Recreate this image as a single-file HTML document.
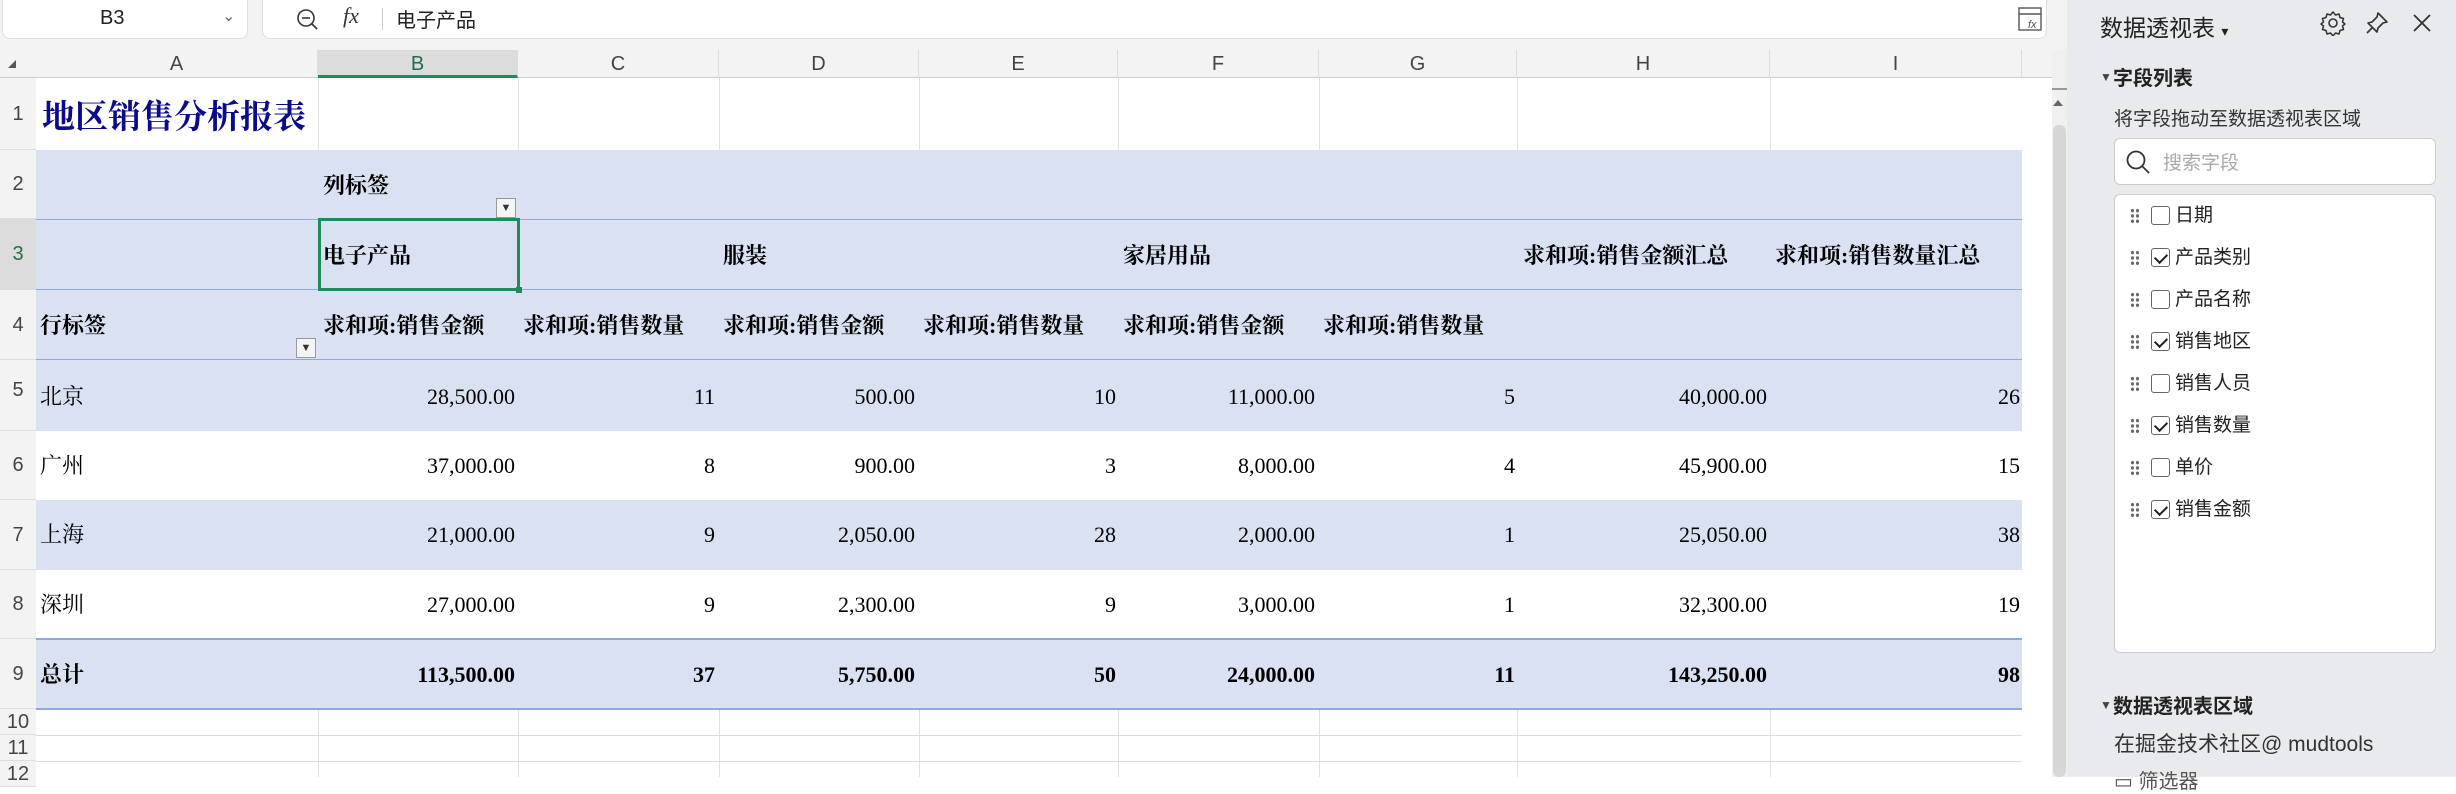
<!DOCTYPE html>
<html><head><meta charset="utf-8"><style>
*{margin:0;padding:0;box-sizing:border-box}
body{width:2456px;height:777px;overflow:hidden;background:#fff;font-family:"Liberation Sans","Noto Sans CJK SC",sans-serif;position:relative}
.a{position:absolute}
.c{position:absolute;font-family:"Liberation Serif","Noto Serif CJK SC",serif;font-size:22px;color:#000;white-space:nowrap;line-height:26px}
.b{font-weight:bold}
.r{text-align:right}
.hd{position:absolute;top:50px;height:28px;font-size:20px;color:#444;text-align:center;line-height:28px;border-right:1px solid #ddd}
.rn{position:absolute;left:0;width:36px;font-size:20px;color:#444;text-align:center;border-bottom:1px solid #ddd;background:#f3f3f3}
.vl{position:absolute;top:78px;width:1px;background:#e2e2e2}
.it{position:absolute;left:2130px;width:290px;font-size:19px;color:#222;height:24px;line-height:24px;white-space:nowrap}
.dots{position:absolute;left:0;top:4px;width:10px;height:16px;background-image:radial-gradient(circle,#666 1.5px,transparent 1.8px);background-size:5px 5.3px}
.cb{position:absolute;left:21px;top:2px;width:19px;height:19px;border:1px solid #666;border-radius:3px;background:#fff}
.cb.on::after{content:"";position:absolute;left:5px;top:2px;width:6px;height:10px;border:solid #222;border-width:0 2px 2px 0;transform:rotate(45deg)}
.lb{position:absolute;left:45px;top:0;white-space:nowrap}
</style></head><body>
<div class="a" style="left:0;top:0;width:2067px;height:50px;background:#f3f3f3"></div>
<div class="a" style="left:2px;top:0;width:246px;height:39px;background:#fff;border-radius:0 0 8px 8px;border:1px solid #ddd;border-top:none"></div>
<div class="a" style="left:100px;top:7px;font-size:20px;color:#222">B3</div>
<div class="a" style="left:222px;top:6px;font-size:16px;color:#666">&#8964;</div>
<div class="a" style="left:262px;top:0;width:1785px;height:39px;background:#fff;border-radius:0 0 8px 8px;border:1px solid #ddd;border-top:none"></div>
<svg class="a" style="left:295px;top:7px" width="26" height="26" viewBox="0 0 26 26"><circle cx="11" cy="11" r="8" fill="none" stroke="#333" stroke-width="1.6"/><line x1="7" y1="11" x2="15" y2="11" stroke="#333" stroke-width="1.6"/><line x1="17" y1="17" x2="22" y2="22" stroke="#333" stroke-width="1.6"/></svg>
<div class="a" style="left:343px;top:3px;font-size:22px;font-style:italic;font-family:'Liberation Serif',serif;color:#333">fx</div>
<div class="a" style="left:382px;top:8px;width:1px;height:22px;background:#ccc"></div>
<div class="a" style="left:396px;top:4px;font-size:20px;color:#222">电子产品</div>
<svg class="a" style="left:2017px;top:6px" width="26" height="26" viewBox="0 0 26 26"><rect x="2" y="2" width="22" height="22" fill="none" stroke="#555" stroke-width="1.4"/><line x1="2" y1="8" x2="24" y2="8" stroke="#555" stroke-width="1.4"/><text x="11" y="22" font-size="11" font-style="italic" fill="#555">fx</text></svg>
<div class="a" style="left:0;top:50px;width:2067px;height:28px;background:#f3f3f3;border-bottom:1px solid #ccc"></div>
<div class="a" style="left:8px;top:60px;width:0;height:0;border-left:8px solid transparent;border-bottom:8px solid #555"></div>
<div class="hd" style="left:36px;width:282px">A</div>
<div class="hd" style="left:318px;width:200px;background:#dcdcdc;color:#1e7145;border-bottom:3px solid #1e8c5a">B</div>
<div class="hd" style="left:518px;width:201px">C</div>
<div class="hd" style="left:719px;width:200px">D</div>
<div class="hd" style="left:919px;width:199px">E</div>
<div class="hd" style="left:1118px;width:201px">F</div>
<div class="hd" style="left:1319px;width:198px">G</div>
<div class="hd" style="left:1517px;width:253px">H</div>
<div class="hd" style="left:1770px;width:252px">I</div>
<div class="a" style="left:0;top:78px;width:36px;height:699px;background:#f3f3f3;border-right:1px solid #ccc"></div>
<div class="rn" style="top:78px;height:72px;line-height:72px">1</div>
<div class="rn" style="top:150px;height:69px;line-height:69px">2</div>
<div class="rn" style="top:219px;height:71px;line-height:71px;background:#dcdcdc;color:#1e7145">3</div>
<div class="rn" style="top:290px;height:70px;line-height:70px">4</div>
<div class="rn" style="top:360px;height:71px;line-height:60px">5</div>
<div class="rn" style="top:431px;height:69px;line-height:69px">6</div>
<div class="rn" style="top:500px;height:70px;line-height:70px">7</div>
<div class="rn" style="top:570px;height:69px;line-height:69px">8</div>
<div class="rn" style="top:639px;height:70px;line-height:70px">9</div>
<div class="rn" style="top:709px;height:26px;line-height:26px">10</div>
<div class="rn" style="top:735px;height:26px;line-height:26px">11</div>
<div class="rn" style="top:761px;height:26px;line-height:26px">12</div>
<div class="vl" style="left:318px;height:699px"></div><div class="vl" style="left:518px;height:699px"></div>
<div class="vl" style="left:719px;height:699px"></div><div class="vl" style="left:919px;height:699px"></div>
<div class="vl" style="left:1118px;height:699px"></div><div class="vl" style="left:1319px;height:699px"></div>
<div class="vl" style="left:1517px;height:699px"></div><div class="vl" style="left:1770px;height:699px"></div>
<div class="vl" style="left:2022px;height:699px"></div>
<div class="a" style="left:36px;top:735px;width:1986px;height:1px;background:#ddd"></div>
<div class="a" style="left:36px;top:761px;width:1986px;height:1px;background:#ddd"></div>
<div class="a" style="left:36px;top:150px;width:1986px;height:281px;background:#d9e1f2"></div>
<div class="a" style="left:36px;top:431px;width:1986px;height:69px;background:#fff"></div>
<div class="a" style="left:36px;top:500px;width:1986px;height:70px;background:#d9e1f2"></div>
<div class="a" style="left:36px;top:570px;width:1986px;height:69px;background:#fff"></div>
<div class="a" style="left:36px;top:639px;width:1986px;height:70px;background:#d9e1f2"></div>
<div class="a" style="left:36px;top:219px;width:1986px;height:1px;background:#8ea9db"></div>
<div class="a" style="left:36px;top:289px;width:1986px;height:1px;background:#8ea9db"></div>
<div class="a" style="left:36px;top:359px;width:1986px;height:1px;background:#8ea9db"></div>
<div class="a" style="left:36px;top:638px;width:1986px;height:2px;background:#8ea9db"></div>
<div class="a" style="left:36px;top:708px;width:1986px;height:2px;background:#8ea9db"></div>
<div class="c" style="left:42px;top:98px;font-size:33px;line-height:40px;color:#0a0a8a;font-weight:bold">地区销售分析报表</div>
<div class="c b" style="left:323px;top:173px">列标签</div>
<div class="a" style="left:496px;top:198px;width:20px;height:20px;background:#f4f4f4;border:1px solid #999;font-size:11px;text-align:center;line-height:18px;color:#333">▼</div>
<div class="c b" style="left:323px;top:243px">电子产品</div>
<div class="c b" style="left:723px;top:243px">服装</div>
<div class="c b" style="left:1123px;top:243px">家居用品</div>
<div class="c b" style="left:1523px;top:243px">求和项:销售金额汇总</div>
<div class="c b" style="left:1775px;top:243px">求和项:销售数量汇总</div>
<div class="c b" style="left:40px;top:313px">行标签</div>
<div class="a" style="left:296px;top:338px;width:20px;height:20px;background:#f4f4f4;border:1px solid #999;font-size:11px;text-align:center;line-height:18px;color:#333">▼</div>
<div class="c b" style="left:323px;top:313px">求和项:销售金额</div>
<div class="c b" style="left:523px;top:313px">求和项:销售数量</div>
<div class="c b" style="left:723px;top:313px">求和项:销售金额</div>
<div class="c b" style="left:923px;top:313px">求和项:销售数量</div>
<div class="c b" style="left:1123px;top:313px">求和项:销售金额</div>
<div class="c b" style="left:1323px;top:313px">求和项:销售数量</div>
<div class="c" style="left:40px;top:384px">北京</div><div class="c" style="left:40px;top:453px">广州</div>
<div class="c" style="left:40px;top:522px">上海</div><div class="c" style="left:40px;top:592px">深圳</div>
<div class="c b" style="left:40px;top:662px">总计</div>
<div class="c r" style="right:1941px;top:384px">28,500.00</div><div class="c r" style="right:1741px;top:384px">11</div><div class="c r" style="right:1541px;top:384px">500.00</div><div class="c r" style="right:1340px;top:384px">10</div><div class="c r" style="right:1141px;top:384px">11,000.00</div><div class="c r" style="right:941px;top:384px">5</div><div class="c r" style="right:689px;top:384px">40,000.00</div><div class="c r" style="right:436px;top:384px">26</div>
<div class="c r" style="right:1941px;top:453px">37,000.00</div><div class="c r" style="right:1741px;top:453px">8</div><div class="c r" style="right:1541px;top:453px">900.00</div><div class="c r" style="right:1340px;top:453px">3</div><div class="c r" style="right:1141px;top:453px">8,000.00</div><div class="c r" style="right:941px;top:453px">4</div><div class="c r" style="right:689px;top:453px">45,900.00</div><div class="c r" style="right:436px;top:453px">15</div>
<div class="c r" style="right:1941px;top:522px">21,000.00</div><div class="c r" style="right:1741px;top:522px">9</div><div class="c r" style="right:1541px;top:522px">2,050.00</div><div class="c r" style="right:1340px;top:522px">28</div><div class="c r" style="right:1141px;top:522px">2,000.00</div><div class="c r" style="right:941px;top:522px">1</div><div class="c r" style="right:689px;top:522px">25,050.00</div><div class="c r" style="right:436px;top:522px">38</div>
<div class="c r" style="right:1941px;top:592px">27,000.00</div><div class="c r" style="right:1741px;top:592px">9</div><div class="c r" style="right:1541px;top:592px">2,300.00</div><div class="c r" style="right:1340px;top:592px">9</div><div class="c r" style="right:1141px;top:592px">3,000.00</div><div class="c r" style="right:941px;top:592px">1</div><div class="c r" style="right:689px;top:592px">32,300.00</div><div class="c r" style="right:436px;top:592px">19</div>
<div class="c r b" style="right:1941px;top:662px">113,500.00</div><div class="c r b" style="right:1741px;top:662px">37</div><div class="c r b" style="right:1541px;top:662px">5,750.00</div><div class="c r b" style="right:1340px;top:662px">50</div><div class="c r b" style="right:1141px;top:662px">24,000.00</div><div class="c r b" style="right:941px;top:662px">11</div><div class="c r b" style="right:689px;top:662px">143,250.00</div><div class="c r b" style="right:436px;top:662px">98</div>
<div class="a" style="left:318px;top:218px;width:202px;height:73px;border:3px solid #1e8c5a"></div>
<div class="a" style="left:516px;top:287px;width:6px;height:6px;background:#1e8c5a"></div>
<div class="a" style="left:2022px;top:78px;width:45px;height:699px;background:#fff"></div>
<div class="a" style="left:2052px;top:50px;width:15px;height:727px;background:#f0f0f0"></div>
<div class="a" style="left:2052px;top:88px;width:15px;height:2px;background:#999"></div>
<div class="a" style="left:2053px;top:100px;width:0;height:0;border-left:5px solid transparent;border-right:5px solid transparent;border-bottom:6px solid #666"></div>
<div class="a" style="left:2053px;top:125px;width:13px;height:652px;background:#d6d6d6;border-radius:6px"></div>
<div class="a" style="left:2067px;top:0;width:389px;height:777px;background:#e8eaed"></div>
<div class="a" style="left:2100px;top:9px;font-size:23px;color:#222">数据透视表 <span style="font-size:14px">▾</span></div>
<svg class="a" style="left:2320px;top:10px" width="26" height="26" viewBox="0 0 26 26"><circle cx="13" cy="13" r="4" fill="none" stroke="#333" stroke-width="1.6"/><path d="M13 2l2.5 3 3.5-1 1 3.5 3.5 1-1 3.5 2.5 2-2.5 2 1 3.5-3.5 1-1 3.5-3.5-1-2.5 3-2.5-3-3.5 1-1-3.5-3.5-1 1-3.5-2.5-2 2.5-2-1-3.5 3.5-1 1-3.5 3.5 1z" fill="none" stroke="#333" stroke-width="1.5" stroke-linejoin="round"/></svg>
<svg class="a" style="left:2364px;top:10px" width="26" height="26" viewBox="0 0 26 26"><path d="M14 3l9 9-4 1-5 5-1 4-9-9 4-1 5-5z M8 18l-5 5" fill="none" stroke="#333" stroke-width="1.6" stroke-linejoin="round"/></svg>
<svg class="a" style="left:2410px;top:11px" width="24" height="24" viewBox="0 0 24 24"><path d="M4 4l16 16M20 4L4 20" stroke="#333" stroke-width="1.8"/></svg>
<div class="a" style="left:2100px;top:70px;font-size:12px;color:#444">▼</div>
<div class="a" style="left:2113px;top:62px;font-size:20px;font-weight:bold;color:#222">字段列表</div>
<div class="a" style="left:2114px;top:104px;font-size:19px;color:#333">将字段拖动至数据透视表区域</div>
<div class="a" style="left:2114px;top:138px;width:322px;height:47px;background:#fff;border:1px solid #ccc;border-radius:6px"></div>
<svg class="a" style="left:2124px;top:148px" width="28" height="28" viewBox="0 0 28 28"><circle cx="12" cy="12" r="8.5" fill="none" stroke="#333" stroke-width="1.8"/><line x1="18" y1="18" x2="25" y2="25" stroke="#333" stroke-width="1.8"/></svg>
<div class="a" style="left:2163px;top:148px;font-size:19px;color:#aaa">搜索字段</div>
<div class="a" style="left:2114px;top:194px;width:322px;height:459px;background:#fff;border:1px solid #ccc;border-radius:6px"></div>
<div class="it" style="top:204px"><span class="dots"></span><span class="cb"></span><span class="lb">日期</span></div>
<div class="it" style="top:246px"><span class="dots"></span><span class="cb on"></span><span class="lb">产品类别</span></div>
<div class="it" style="top:288px"><span class="dots"></span><span class="cb"></span><span class="lb">产品名称</span></div>
<div class="it" style="top:330px"><span class="dots"></span><span class="cb on"></span><span class="lb">销售地区</span></div>
<div class="it" style="top:372px"><span class="dots"></span><span class="cb"></span><span class="lb">销售人员</span></div>
<div class="it" style="top:414px"><span class="dots"></span><span class="cb on"></span><span class="lb">销售数量</span></div>
<div class="it" style="top:456px"><span class="dots"></span><span class="cb"></span><span class="lb">单价</span></div>
<div class="it" style="top:498px"><span class="dots"></span><span class="cb on"></span><span class="lb">销售金额</span></div>
<div class="a" style="left:2100px;top:698px;font-size:12px;color:#444">▼</div>
<div class="a" style="left:2113px;top:690px;font-size:20px;font-weight:bold;color:#222">数据透视表区域</div>
<div class="a" style="left:2114px;top:728px;font-size:21px;color:#333">在掘金技术社区@ mudtools</div>
<div class="a" style="left:2114px;top:765px;font-size:20px;color:#555">▭ 筛选器</div>
</body></html>
